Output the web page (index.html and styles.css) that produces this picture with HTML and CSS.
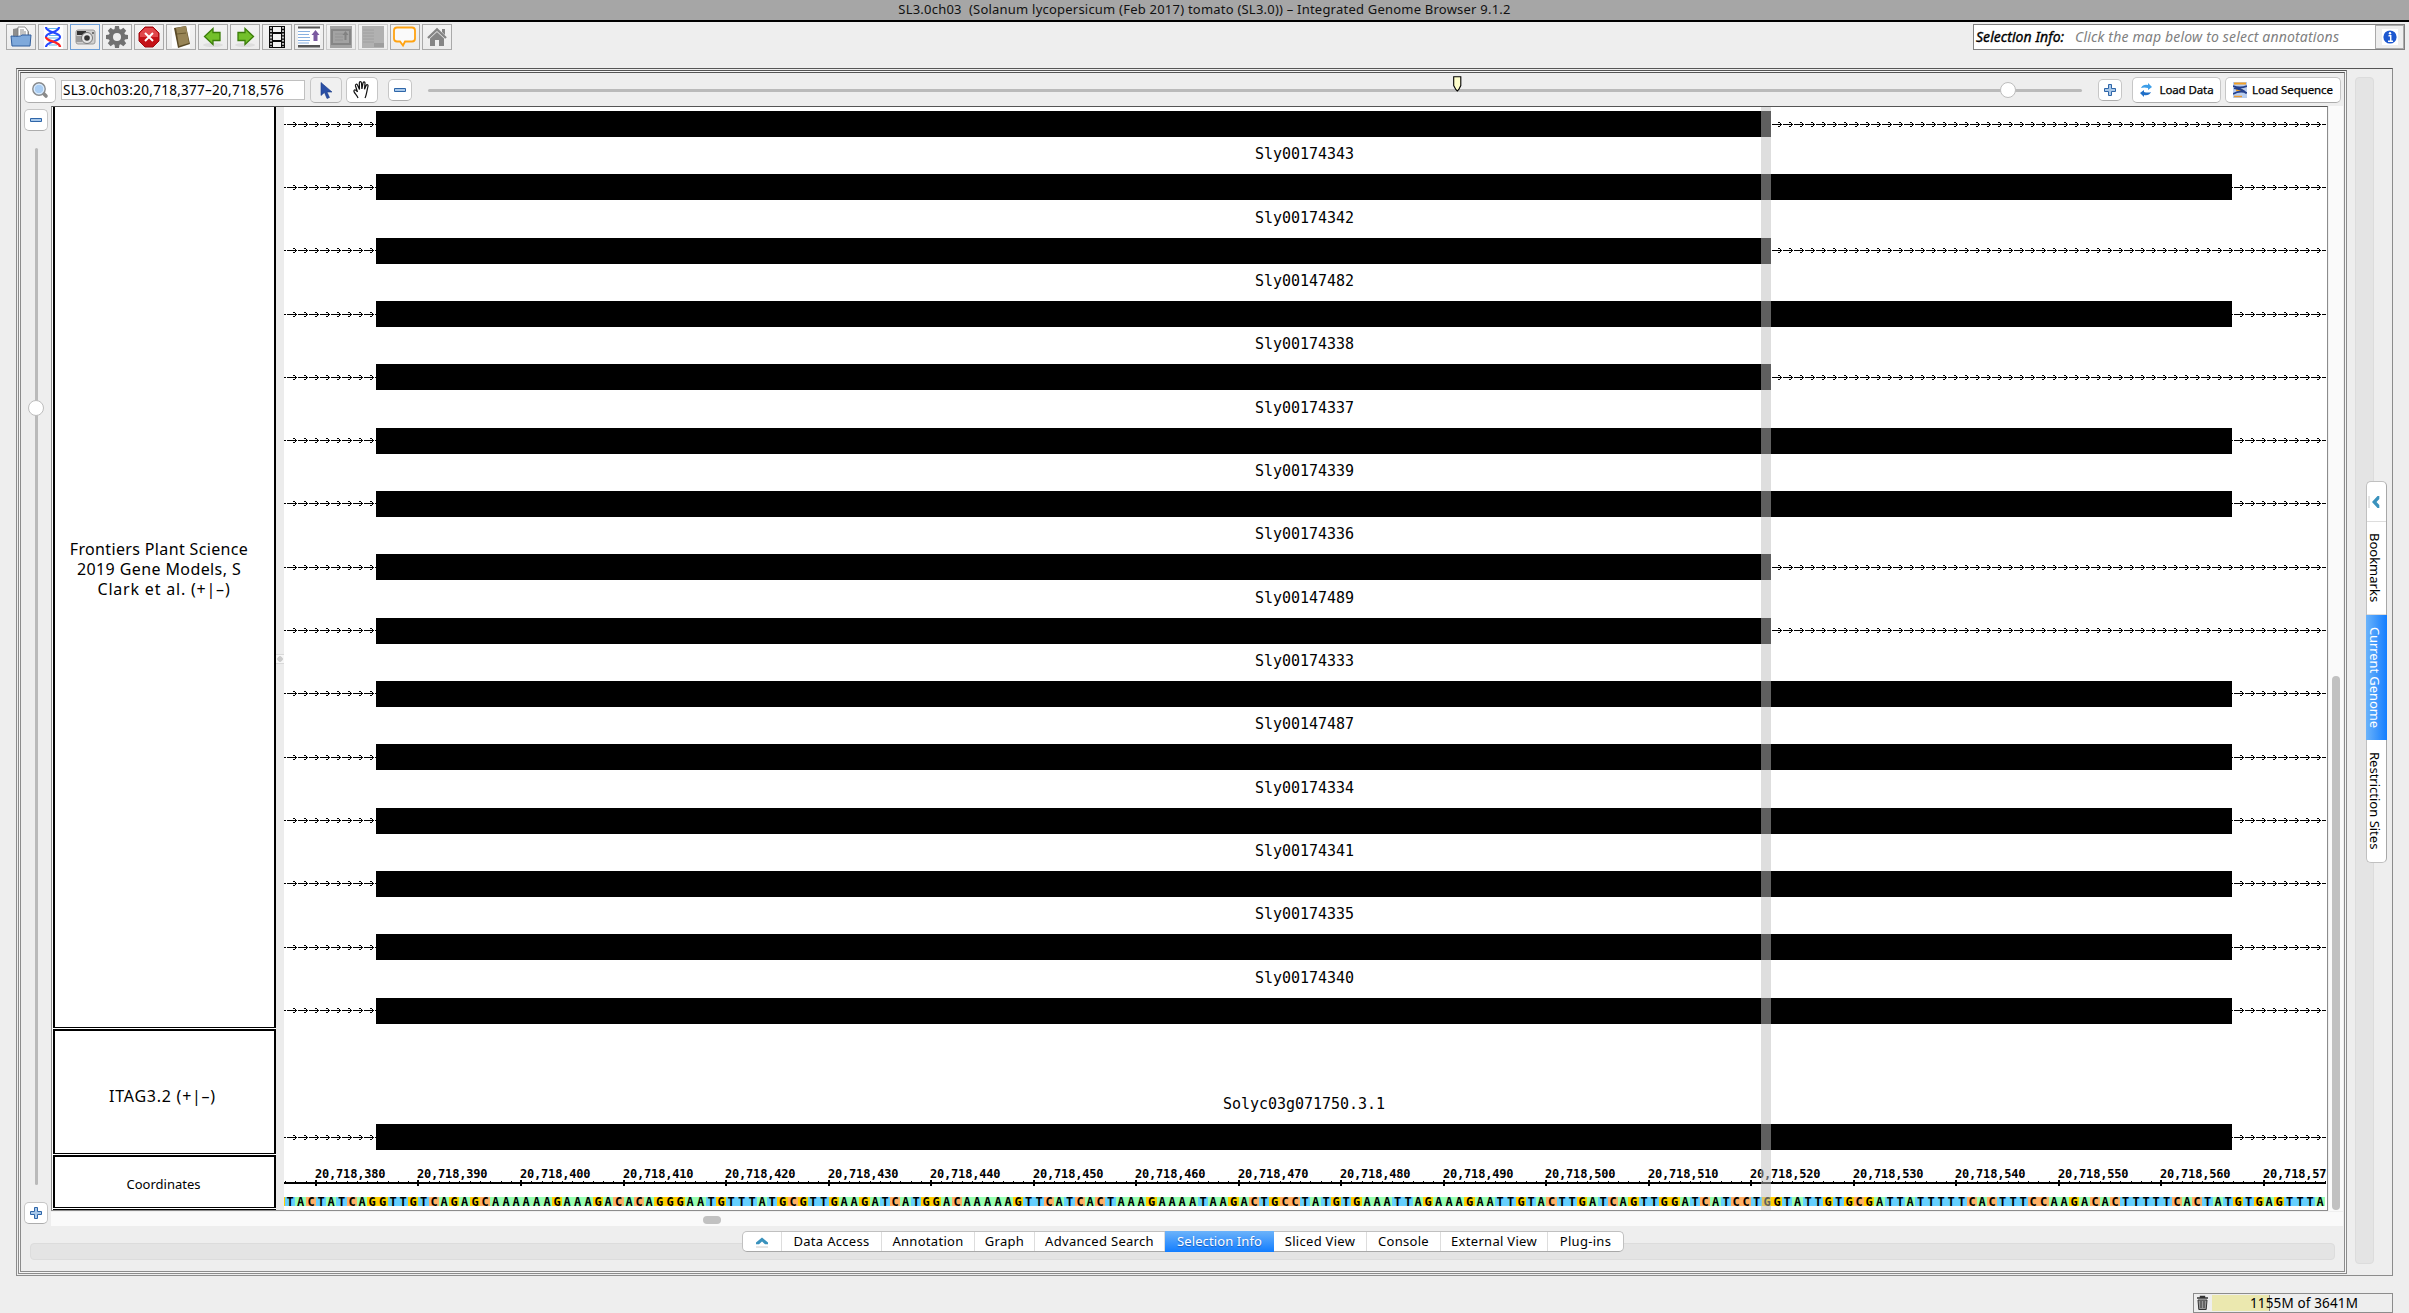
FILE: index.html
```html
<!DOCTYPE html>
<html lang="en">
<head>
<meta charset="utf-8">
<title>Integrated Genome Browser 9.1.2</title>
<link rel="stylesheet" href="styles.css">
</head>
<body>
<header class="titlebar"><span>SL3.0ch03&nbsp; (Solanum lycopersicum (Feb 2017) tomato (SL3.0)) – Integrated Genome Browser 9.1.2</span></header>

<div class="toolbar">
  <div class="tools">
    <button class="tool"><svg width="24" height="24" viewBox="0 0 24 24"><path d="M4 20V4l5-1h8l3 4v14H5z" fill="#8d8d8d"/><path d="M9 2h7l3 4v8H9z" fill="#fff" stroke="#777" stroke-width=".8"/><path d="M11 5h4M11 7h6M11 9h6" stroke="#888"/><path d="M2 11q10 1 11-1h9l-1 11H3z" fill="#7fa9db" stroke="#335f9d"/></svg></button>
    <button class="tool"><svg width="24" height="24" viewBox="0 0 24 24"><rect x="3" width="19" height="24" fill="#fff"/><path d="M7 3.500h10M8 10.500h9M7 13h10M8 20h8" stroke="#66b8e8"/><path d="M5 2C5 8 19 7 19 12" fill="none" stroke="#2448ff" stroke-width="2.200"/><path d="M18 2C18 8 5 7 5 12" fill="none" stroke="#2448ff" stroke-width="2.200"/><path d="M19 12C19 17 5 16 5 22" fill="none" stroke="#2448ff" stroke-width="2.200"/><path d="M5 12C5 17 19 16 19 22" fill="none" stroke="#f22" stroke-width="2.400"/></svg></button>
    <button class="tool current"><svg width="24" height="24" viewBox="0 0 24 24"><path d="M3 7q0-2 2-2h15q2 0 2 2v10q0 2-2 2H5q-2 0-2-2z" fill="#cfcfcf" stroke="#999"/><rect x="4" y="6" width="9" height="4" fill="#333"/><rect x="3" y="11" width="6" height="6" fill="#9a9a9a"/><circle cx="14" cy="13" r="5.500" fill="#e5e5e5" stroke="#777"/><circle cx="14" cy="13" r="2.800" fill="#333"/><circle cx="20" cy="8" r="1" fill="#555"/></svg></button>
    <button class="tool"><svg width="24" height="24" viewBox="0 0 24 24"><g fill="#717171"><circle cx="12" cy="12" r="8.300"/><g id="teeth"><path d="M10 1h4l.7 5H9.300zM10 23h4l.7-5H9.300z"/><path d="M1 10v4l5 .7V9.300zM23 10v4l-5 .7V9.300z"/></g><use href="#teeth" transform="rotate(45 12 12)"/></g><circle cx="12" cy="12" r="4" fill="#eee"/></svg></button>
    <button class="tool"><svg width="24" height="24" viewBox="0 0 24 24"><path d="M8 2h8l6 6v8l-6 6H8l-6-6V8z" fill="#c41218" stroke="#a00a10"/><path d="M8 3h8l5 5v4H3V8z" fill="#e0474b"/><path d="M8 8l8 8M16 8l-8 8" stroke="#fff" stroke-width="2"/></svg></button>
    <button class="tool"><svg width="24" height="24" viewBox="0 0 24 24"><rect x="3" y="1" width="18" height="22" fill="#fff"/><path d="M5 3l12-2 4 18-12 4z" fill="#5a4a26"/><path d="M7 3l10-2 3 17-10 3z" fill="#988557"/><path d="M8 9l9-1" stroke="#6b5a30"/></svg></button>
    <button class="tool"><svg width="24" height="24" viewBox="0 0 24 24"><ellipse cx="12" cy="20" rx="10" ry="2" fill="#ddd"/><path d="M3.500 11.500l8.500-8v4h7v8h-7v4z" fill="#73c02b" stroke="#3b7d0a" stroke-width="1.300"/></svg></button>
    <button class="tool"><svg width="24" height="24" viewBox="0 0 24 24"><ellipse cx="12" cy="20" rx="10" ry="2" fill="#ddd"/><path d="M20.500 11.500l-8.500-8v4H5v8h7v4z" fill="#73c02b" stroke="#3b7d0a" stroke-width="1.300"/></svg></button>
    <button class="tool"><svg width="24" height="24" viewBox="0 0 24 24"><path d="M4 1h16v22H4z" fill="#0a0a0a"/><path d="M8 2h8v5H8zM8 9h8v6H8zM8 17h8v5H8z" fill="#f2f2f2"/><path d="M6 2v20M18 2v20" stroke="#eee" stroke-width="1.600" stroke-dasharray="1.800 1.400"/></svg></button>
    <button class="tool"><svg width="24" height="24" viewBox="0 0 24 24"><path d="M1 3h22v18H1z" fill="#fff"/><path d="M1 1.500h22v2H1zM1 20h22v2.500H1z" fill="#555"/><path d="M1 6.500h12M1 9.500h11M1 12.500h12M1 15.500h12M1 18h11" stroke="#88b0e0" stroke-width="1.200"/><path d="M18.500 5l4 5h-2v6h-4v-6h-2z" fill="#7b5aa0"/></svg></button>
    <button class="tool disabled"><svg width="24" height="24" viewBox="0 0 24 24"><path d="M1 1h22v22H1z" fill="#a3a3a3"/><path d="M3 5h18v14H3z" fill="none" stroke="#868686" stroke-width="2"/><path d="M6 9h8M6 12h8M6 15h8" stroke="#939393"/><path d="M16.500 6l3 4h-2v5h-2v-5h-2z" fill="#828282"/></svg></button>
    <button class="tool disabled"><svg width="24" height="24" viewBox="0 0 24 24"><path d="M1 1h22v22H1z" fill="#b1b1b1"/><path d="M2 5h11M2 8h11M2 11h11M2 14h11M2 17h11" stroke="#a0a0a0"/><path d="M13 18h10v4H13z" fill="#9d9d9d"/></svg></button>
    <button class="tool"><svg width="24" height="24" viewBox="0 0 24 24"><path d="M4 2.500h15q3 0 3 3v8q0 3-3 3h-7l-2 4-3-4H4q-3 0-3-3v-8q0-3 3-3z" fill="#fafafa" stroke="#ffa312" stroke-width="1.800"/></svg></button>
    <button class="tool"><svg width="24" height="24" viewBox="0 0 24 24"><path d="M3 13l9-8.500 9 8.500" fill="none" stroke="#858585" stroke-width="2.400"/><path d="M17 4h3v6l-3-3zM5 13.500L12 7l7 6.500V21h-5v-6h-4v6H5z" fill="#858585"/></svg></button>
  </div>
  <div class="selection">
    <b>Selection Info:</b><i>Click the map below to select annotations</i>
    <button class="info"><svg width="16" height="16" viewBox="0 0 16 16"><path d="M0 0h16v16H0z" fill="#fff"/><circle cx="8" cy="8" r="6.600" fill="#1d58d0"/><path d="M6.500 6.800h2.200v5M6 12.200h5" stroke="#fff" stroke-width="1.500" fill="none"/><circle cx="8" cy="4.200" r="1.200" fill="#fff"/></svg></button>
  </div>
</div>

<main class="frame outer">
  <div class="frame middle">
    <div class="frame inner">
      <div class="nav">
        <button class="push wide"><svg width="18" height="18" viewBox="0 0 18 18"><path d="M11 11l4 4" stroke="#8a8a8a" stroke-width="3.600" stroke-linecap="round"/><circle cx="8" cy="8" r="6.200" fill="#a9cdf3" stroke="#8b8b8b" stroke-width="1.400"/><circle cx="8" cy="8" r="4.800" fill="#a9cdf3" stroke="#e8f2fc"/></svg></button>
        <div class="location">SL3.0ch03:20,718,377–20,718,576</div>
        <button class="push wide pressed"><svg width="16" height="20" viewBox="0 0 16 20"><path d="M3 2.500v13l3.500-3 2.500 6 2.500-1-2.500-5.500h5z" fill="#2a4fa5" stroke="#1d3c86" stroke-width=".6"/></svg></button>
        <button class="push wide hand"><svg width="20" height="20" viewBox="0 0 20 20"><path d="M6 18C5 15 1 12 2 10.500s3 .5 3.500 1.500L3.500 6c-.5-2 1.500-2.500 2-1l2 4.500L7.300 3c0-1.800 2-1.800 2.200 0l.4 6L11 3c.4-1.700 2.200-1.300 2 .3l-.5 6 1.700-4c.7-1.300 2.200-.6 1.800.8-.8 3-1.500 9-3 12" fill="#fff" stroke="#111" stroke-width="1.200"/></svg></button>
        <button class="push small minus"><svg width="14" height="14" viewBox="0 0 14 14"><path d="M1.500 5.500h11v3h-11z" fill="#a8c8ea" stroke="#2f66a8"/></svg></button>
        <div class="hslider">
          <svg class="marker" width="9" height="16" viewBox="0 0 9 16"><path d="M.7.700h7.100v8.800l-2 4-1.500 1.500-1.500-1.500-2.100-4z" fill="#ffffcc" stroke="#000" stroke-width="1.100"/></svg>
          <span class="knob"></span>
        </div>
        <button class="push small plus"><svg width="14" height="14" viewBox="0 0 14 14"><path d="M5.500 1.500h3v4h4v3h-4v4h-3v-4h-4v-3h4z" fill="#a8c8ea" stroke="#2f66a8"/></svg></button>
        <button class="push load data"><svg width="14" height="16" viewBox="0 0 14 16"><path d="M2 6q2-4 7-3V1l4 4-4 3V6Q5 5 2 6z" fill="#3d9ee8"/><path d="M12 10q-2 4-7 3v2l-4-4 4-3v2q4 1 7 0z" fill="#1f6fc8"/></svg><span>Load Data</span></button>
        <button class="push load seq"><svg width="14" height="16" viewBox="0 0 14 16"><path d="M0 0h14v16H0z" fill="#b9cdee"/><path d="M1 1.500h12M3 8h7" stroke="#f2a024" stroke-width="2"/><path d="M1 14.500h8" stroke="#e89a30" stroke-width="1.500"/><path d="M0 4q7 3 14 0M0 12q7-4 14-1M1 6q8 1 12 5" fill="none" stroke="#24408c" stroke-width="1.800"/></svg><span>Load Sequence</span></button>
      </div>

      <div class="work">
        <div class="vzoom">
          <button class="push small"><svg width="14" height="14" viewBox="0 0 14 14"><path d="M1.500 5.500h11v3h-11z" fill="#a8c8ea" stroke="#2f66a8"/></svg></button>
          <div class="vslider"><span class="knob"></span></div>
          <button class="push small"><svg width="14" height="14" viewBox="0 0 14 14"><path d="M5.500 1.500h3v4h4v3h-4v4h-3v-4h-4v-3h4z" fill="#a8c8ea" stroke="#2f66a8"/></svg></button>
        </div>
        <div class="mapbox">
          <div class="headers">
            <div class="track models"><p><span class="l1">Frontiers Plant Science</span><span class="l2">2019 Gene Models, S</span><span class="l3">Clark et al. (+|–)</span></p></div>
            <div class="track itag"><span>ITAG3.2 (+|–)</span></div>
            <div class="track coords"><span>Coordinates</span></div>
          </div>
          <div class="splitter"><i></i></div>
          <svg id="map" class="map" width="2043" height="1103" viewBox="284 107 2043 1103"></svg>
        </div>
        <div class="vscroll"><span></span></div>
        <div class="hscroll"><span></span></div>
      </div>

      <div class="bottom">
        <div class="trough">
          <nav class="tabs">
            <a class="t0"><svg width="14" height="12" viewBox="0 0 14 12"><path d="M1 6.500l6-5 6 5v1.800H10L7 5.500 4 8.300H1z" fill="#3a92bd"/><path d="M1 11h12" stroke="#ccc"/></svg></a><a class="t1">Data Access</a><a class="t2">Annotation</a><a class="t3">Graph</a><a class="t4">Advanced Search</a><a class="t5 on">Selection Info</a><a class="t6">Sliced View</a><a class="t7">Console</a><a class="t8">External View</a><a class="t9">Plug-ins</a>
          </nav>
        </div>
      </div>
    </div>
  </div>

  <aside class="side">
    <div class="sidetrough">
      <nav class="sidetabs">
        <a class="s0"><svg width="12" height="14" viewBox="0 0 12 14"><path d="M9.500 1l-5.500 6 5.500 6h1.800V10L8.500 7l2.800-3V1z" fill="#3a92bd"/><path d="M1 1v12" stroke="#ccc"/></svg></a><a class="s1">Bookmarks</a><a class="s2 on">Current Genome</a><a class="s3">Restriction Sites</a>
      </nav>
    </div>
  </aside>
</main>

<footer class="status">
  <div class="memory">
    <svg width="13" height="16" viewBox="0 0 13 16"><path d="M1 3h11M4.500 2.500v-1h4v1" stroke="#333" stroke-width="1.400" fill="none"/><path d="M2 5h9l-.8 9.500H2.800z" fill="#999" stroke="#333"/><path d="M5 6v7M8 6v7" stroke="#333"/></svg>
    <div class="gauge"><span class="used"></span><span class="text">1155M of 3641M</span></div>
  </div>
</footer>
<script src="map.js"></script>
</body>
</html>
```
FILE: styles.css
```css
* { box-sizing: border-box; }
body {
  margin: 0; width: 2409px; height: 1313px; overflow: hidden;
  background: #eeeeee; color: #000;
  font: 13px/16px "Noto Sans", "Open Sans", sans-serif;
  display: flex; flex-direction: column;
}
button { padding: 0; margin: 0; font: inherit; color: inherit; display: flex; align-items: center; justify-content: center; }
svg { display: block; flex: none; }

.titlebar {
  flex: none; height: 22px; background: #a6a6a6; border-bottom: 2px solid #000;
  text-align: center; line-height: 18px; color: #111;
}
.titlebar span { letter-spacing: .22px; }

.toolbar { flex: none; height: 46px; padding: 2px 4px 0 6px; display: flex; justify-content: space-between; align-items: flex-start; }
.tools { display: flex; gap: 2px; }
.tool { width: 30px; height: 26px; border: 1px solid #a9a9a9; background: linear-gradient(#f3f3f3, #ececec); }
.tool.current { border-color: #6f9fd6; }
.tool.disabled { border-color: #cbcbcb; }
.selection { width: 432px; height: 26px; border: 1px solid #808080; background: #fff; display: flex; align-items: center; padding-left: 2px; font-size: 14px; font-style: italic; white-space: nowrap; }
.selection b { font-weight: 400; -webkit-text-stroke: .35px #000; width: 99px; letter-spacing: .05px; }
.selection i { color: #808080; flex: 1; letter-spacing: .17px; }
.info { width: 29px; height: 24px; border: 1px solid #aaa; background: #eee; }

.frame { border: 1px solid #8c8c8c; border-top-color: #555; background: #f6f6f6; }
.outer { flex: none; margin-left: 16px; width: 2377px; height: 1208px; padding: 1px 0 0 1px; display: flex; background: #eeeeee; }
.middle { width: 2329px; height: 1204px; padding: 1px; flex: none; }
.inner { width: 2325px; height: 1200px; background: #eeeeee; }

.nav { height: 33px; padding: 1px 3px 0; display: flex; align-items: center; }
.push { background: #fff; border: 1px solid #c6c6c6; border-bottom-color: #adadad; border-radius: 5px; flex: none; }
.push.wide { width: 32px; height: 26px; }
.push.small { width: 24px; height: 22px; }
.push.pressed { background: #f0f0f0; margin-left: 5px; }
.push.hand { margin-left: 4px; }
.push.minus { margin-left: 10px; }
.push.plus { margin-left: 16px; }
.push.load { height: 26px; gap: 6px; font-size: 11.500px; letter-spacing: -.1px; -webkit-text-stroke: .25px #000; }
.push.data { width: 89px; margin-left: 10px; }
.push.seq { width: 116px; margin-left: 4px; gap: 5px; }
.location { width: 244px; height: 20px; margin-left: 5px; padding-left: 1px; background: #fff; border: 1px solid #c0c0c0; font-size: 13.5px; line-height: 18px; letter-spacing: .28px; white-space: nowrap; }
.hslider { position: relative; margin-left: 16px; width: 1654px; height: 3px; border-radius: 2px; background: #bababa; }
.marker { position: absolute; left: 1025px; top: -13px; }
.knob { position: absolute; width: 16px; height: 16px; border-radius: 8px; background: #fff; border: 1px solid #bdbdbd; }
.hslider .knob { left: 1572px; top: -7px; }

.work { display: grid; grid-template: 1105px 15px / 30px 2277px 16px; }
.vzoom { grid-row: 1 / 3; padding: 3px 0 2px 3px; display: flex; flex-direction: column; justify-content: space-between; }
.vslider { position: relative; width: 3px; height: 1037px; margin: 0 0 0 11px; background: #bababa; border-radius: 2px; }
.vslider .knob { left: -7px; top: 252px; }
.mapbox { border: 1px solid #8c8c8c; border-top-color: #555; background: #fff; display: flex; overflow: hidden; }
.headers { width: 224px; padding-left: 1px; flex: none; display: grid; grid-template-rows: 922px 126px 54px 1px; }
.headers::after { content: ""; background: #000; }
.track { border: 2px solid #000; border-bottom-width: 1px; margin-bottom: 1px; display: flex; align-items: center; justify-content: center; text-align: center; font-size: 16px; line-height: 20px; white-space: nowrap; }
.models { border-top: 0; }
.models p { margin: 4px 11px 0 0; width: 200px; display: flex; flex-direction: column; }
.l1 { letter-spacing: .35px; }
.l2 { letter-spacing: .4px; }
.l3 { padding-left: 10px; letter-spacing: .8px; }
.itag { padding: 8px 4px 0 0; letter-spacing: .75px; }
.coords { font-size: 13px; padding-top: 3px; padding-right: 2px; }
.splitter { width: 8px; background: #ececec; flex: none; }
.splitter i { display: block; margin: 547px 0 0; height: 10px; border: 1px solid #d8d8d8; border-width: 1px 0; background: radial-gradient(circle, #ccc 2.500px, #f6f6f6 3px); }
.map { font-family: "DejaVu Sans Mono", monospace; }
.vscroll { background: #fafafa; border-left: 1px solid #f0f0f0; margin-right: 1px; padding: 570px 0 0 3px; }
.vscroll span { display: block; width: 8px; height: 534px; border-radius: 4px; background: #c1c1c1; }
.hscroll { grid-column: 2 / 4; background: #fafafa; padding: 4px 0 0 652px; border-top: 1px solid #f0f0f0; margin-right: 1px; }
.hscroll span { display: block; width: 18px; height: 8px; border-radius: 4px; background: #c1c1c1; }

.bottom { padding: 17px 9px 0; }
.trough { height: 17px; border-radius: 4px; border: 1px solid #dcdcdc; background: #e4e4e4; display: flex; }
.tabs { margin: -13px 0 0 711px; height: 21px; display: flex; background: #fff; border: 1px solid #c0c0c0; border-bottom-color: #a8a8a8; border-radius: 5px; }
.tabs a { display: flex; align-items: center; justify-content: center; padding-bottom: 2px; border-right: 1px solid #ddd; font-size: 13px; white-space: nowrap; letter-spacing: .3px; }
.tabs a:last-child { border-right: 0; }
.tabs .on { background: linear-gradient(#6cb3fa, #127dff); color: #fff; margin: -1px 0; border: 0; text-shadow: 0 1px 1px rgba(0, 40, 120, .5); letter-spacing: .1px; }
.tabs .t0 { width: 39px; padding-bottom: 0; } .t1 { width: 100px; } .t2 { width: 93px; } .t3 { width: 60px; } .t4 { width: 130px; }
.t5 { width: 109px; } .t6 { width: 93px; } .t7 { width: 74px; } .t8 { width: 107px; } .t9 { width: 75px; }

.side { padding: 7px 0 0 8px; }
.sidetrough { width: 19px; height: 1187px; border-radius: 4px; border: 1px solid #dcdcdc; background: #e4e4e4; }
.sidetabs { width: 21px; margin: 403px 0 0 10px; height: 382px; display: flex; flex-direction: column; background: #fff; border: 1px solid #c0c0c0; border-right-color: #a8a8a8; border-radius: 5px; }
.sidetabs a { display: flex; align-items: center; justify-content: center; writing-mode: vertical-rl; white-space: nowrap; border-bottom: 1px solid #ddd; line-height: 18px; padding-right: 3px; }
.sidetabs a:last-child { border-bottom: 0; }
.sidetabs .s0 { padding-right: 6px; }
.sidetabs .on { background: linear-gradient(90deg, #6cb3fa, #127dff); color: #fff; margin: 0 -1px; border: 0; padding-right: 4px; }
.s0 { height: 40px; } .s1 { height: 93px; } .s2 { height: 125px; letter-spacing: -.1px; } .s3 { height: 122px; }

.status { padding: 17px 16px 0 0; display: flex; justify-content: flex-end; }
.memory { width: 200px; height: 20px; border: 1px solid #8c8c8c; display: flex; align-items: center; padding-left: 2px; }
.gauge { position: relative; flex: 1; height: 16px; margin: 0 0 0 3px; text-align: center; font-size: 13.5px; line-height: 16px; }
.used { position: absolute; left: 0; top: 0; width: 58px; height: 16px; background: #ebe8af; border-right: 1px solid #888; }
.text { position: relative; left: 2px; letter-spacing: .15px; }
```
FILE: map.js
```js
const NS = "http://www.w3.org/2000/svg";
const map = document.getElementById("map");
const LEFT = 284, RIGHT = 2326, BASE = 10.2526, FIRST = 377, X0 = 285.2;
const LONG = 2232, SHORT = 1771, EXON = 376;

function add(name, attrs, text) {
  const el = document.createElementNS(NS, name);
  for (const key in attrs) el.setAttribute(key, attrs[key]);
  if (text) el.textContent = text;
  map.appendChild(el);
  return el;
}
function rect(x, y, width, height, fill) {
  add("rect", { x, y, width, height, fill, "shape-rendering": "crispEdges" });
}
function label(text, x, y, width, size, extra) {
  add("text", Object.assign({ x, y, textLength: width, "font-size": size }, extra), text);
}

// Intron line: dashes with a chevron every 11 px.
function intron(from, to, y) {
  let d = "";
  for (let gap = 275; gap < to; gap += 11) {
    const a = Math.max(from, gap + 1), b = Math.min(to, gap + 11);
    if (b > a) d += `M${a} ${y}h${b - a}v1h${a - b}z`;
    const tip = gap + 10;
    if (tip - 3 >= from && tip < to) {
      d += `M${tip - 3} ${y - 2}h2v1h-2zM${tip - 1} ${y - 1}h1v1h-1z`;
      d += `M${tip - 1} ${y + 1}h1v1h-1zM${tip - 3} ${y + 2}h2v1h-2z`;
    }
  }
  add("path", { d, fill: "#000", "shape-rendering": "crispEdges" });
}
function transcript(top, axis, end) {
  intron(LEFT, EXON, axis);
  rect(EXON, top, end - EXON, 26, "#000");
  intron(end, RIGHT, axis);
}

const rows = [
  ["", SHORT], ["Sly00174343", LONG], ["Sly00174342", SHORT], ["Sly00147482", LONG],
  ["Sly00174338", SHORT], ["Sly00174337", LONG], ["Sly00174339", LONG], ["Sly00174336", SHORT],
  ["Sly00147489", SHORT], ["Sly00174333", LONG], ["Sly00147487", LONG], ["Sly00174334", LONG],
  ["Sly00174341", LONG], ["Sly00174335", LONG], ["Sly00174340", LONG]
];
rows.forEach(([name, end], i) => {
  const top = Math.floor(111.5 + 63.33 * i);
  transcript(top, Math.floor(124.01 + 63.33 * i), end);
  if (name) label(name, 1255, top - 15, 99, 15);
});
transcript(1124, 1137, LONG);
label("Solyc03g071750.3.1", 1223, 1109, 162, 15);

// Coordinate axis
rect(LEFT, 1182, RIGHT - LEFT, 2, "#000");
for (let pos = FIRST; pos <= 576; pos++) {
  const x = Math.round(X0 + (pos - FIRST) * BASE);
  if (x >= RIGHT) break;
  if (pos % 10) rect(x, 1181, 1, 1, "#000");
  else {
    rect(x - 1, 1180, 2, 6, "#000");
    if (pos < 570) label("20,718," + pos, x - 1, 1178, 70.5, 12, { "font-weight": "bold" });
    else label("20,718,57", x - 1, 1178, 63.5, 12, { "font-weight": "bold" });
  }
}

// Residues
const sequence =
  "TACTATCAGGTTGTCAGAGCAAAAAAGAAAGACACAGGGAATGTTTATGCGTTGAAGATCATGGACAAAAAGT" +
  "TCATCACTAAAGAAAATAAGACTGCCTATGTGAAATTAGAAAGAATTGTACTTGATCAGTTGGATCATCCTGG" +
  "TATTGTGCGATTATTTTTCACTTTCCAAGACACTTTTTCACTATGTGAGTTTA";
const colors = { A: "#99ffb3", T: "#66d0ff", C: "#ffb066", G: "#ffd000" };
rect(LEFT, 1197, 1, 9, colors.G);
[...sequence].forEach((base, i) => {
  const x = Math.round(X0 + i * BASE), next = Math.min(RIGHT, Math.round(X0 + (i + 1) * BASE));
  rect(x, 1197, next - x, 9, colors[base]);
  add("text", { x: (x + next) / 2, y: 1206, "text-anchor": "middle", "font-size": 12, "font-weight": "bold" }, base);
});

// Zoom stripe
rect(1761, 107, 10, 1103, "rgba(190,190,190,.5)");
```
